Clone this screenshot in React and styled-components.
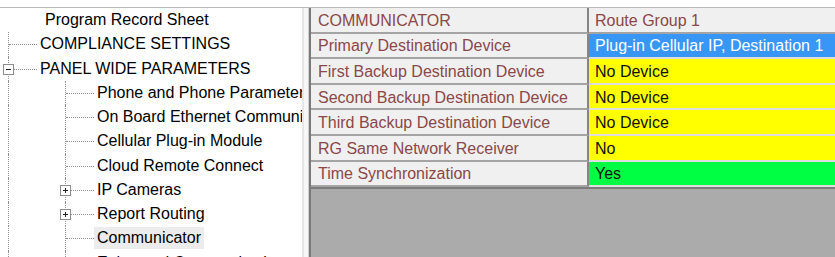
import React from 'react';
import styled, { createGlobalStyle, css } from 'styled-components';

const GlobalStyle = createGlobalStyle`
    html, body {
        margin: 0;
        padding: 0;
        background: #ffffff;
        overflow: hidden;
    }
`;

const Frame = styled.div`
    width: 835px;
    height: 257px;
    padding-top: 7px;
    box-sizing: border-box;
    background: #ffffff;
    font-family: 'Liberation Sans', Arial, sans-serif;
`;

const Main = styled.div`
    display: flex;
    height: 250px;
    border-top: 1px solid #b9b9b9;
    box-sizing: border-box;
`;

const TreePanel = styled.div`
    width: 302px;
    flex-shrink: 0;
    overflow: hidden;
    background: #ffffff;
`;

const TreeRow = styled.div`
    display: flex;
    align-items: center;
    height: 24.25px;
    white-space: nowrap;
    padding-left: ${p => (p.$root ? '42px' : '0')};
`;

const dotted = '1px dotted #8f8f8f';

const Guide = styled.div`
    position: relative;
    width: 57px;
    height: 100%;
    flex-shrink: 0;

    &::before {
        content: '';
        position: absolute;
        left: 8px;
        top: 0;
        bottom: 0;
        border-left: ${dotted};
    }
`;

const Connector = styled.div`
    position: relative;
    width: 37px;
    height: 100%;
    flex-shrink: 0;

    &::before {
        content: '';
        position: absolute;
        left: 8px;
        top: 0;
        bottom: 0;
        border-left: ${dotted};
    }

    &::after {
        content: '';
        position: absolute;
        left: 9px;
        right: 0;
        top: 50%;
        border-top: ${dotted};
    }
`;

const Expander = styled.span`
    position: absolute;
    z-index: 1;
    left: 3px;
    top: calc(50% - 5px);
    width: 9px;
    height: 9px;
    border: 1px solid #8c8c8c;
    background: #ffffff;

    &::before {
        content: '';
        position: absolute;
        left: 2px;
        top: 4px;
        width: 5px;
        height: 1px;
        background: #222222;
    }

    ${p => p.$plus && css`
        &::after {
            content: '';
            position: absolute;
            left: 4px;
            top: 2px;
            width: 1px;
            height: 5px;
            background: #222222;
        }
    `}
`;

const TreeLabel = styled.span`
    font-size: 16px;
    line-height: 22px;
    color: #000000;
    padding: 0 3px;
    background: ${p => (p.$selected ? '#ececec' : 'transparent')};
`;

const Splitter = styled.div`
    width: 7px;
    flex-shrink: 0;
    box-sizing: border-box;
    background: #f7f7f7;
    border-left: 2px solid #e6e6e6;
    border-right: 1px solid #d0d0d0;
`;

const GridArea = styled.div`
    flex: 1;
    background: #ababab;
    border-left: 2px solid #7a7a7a;
    overflow: hidden;
`;

const Table = styled.div`
    display: grid;
    grid-template-columns: 278px 1fr;
    grid-auto-rows: 25.6px;
    border-bottom: 2px solid #7c7c7c;
`;

const Cell = styled.div`
    display: flex;
    align-items: center;
    box-sizing: border-box;
    font-size: 16px;
    white-space: nowrap;
    overflow: hidden;
    padding: 2px 0 0 7px;
    background: #f0f0f0;
    color: #8a4848;
    border-bottom: 2px solid #a4a4a4;
`;

const LabelCell = styled(Cell)`
    border-right: 2px solid #858585;
`;

const valueColors = {
    head: { bg: '#f0f0f0', fg: '#8a4848', line: '#a4a4a4' },
    blue: { bg: '#3896f7', fg: '#ffffff', line: '#dcdcdc' },
    yellow: { bg: '#ffff00', fg: '#111111', line: '#dedede' },
    green: { bg: '#00ff42', fg: '#111111', line: '#dedede' },
};

const ValueCell = styled(Cell)`
    padding-left: 6px;
    background: ${p => valueColors[p.$tone].bg};
    color: ${p => valueColors[p.$tone].fg};
    border-bottom-color: ${p => valueColors[p.$tone].line};
`;

const treeRows = [
    { text: 'Program Record Sheet', root: true },
    { text: 'COMPLIANCE SETTINGS', level: 0 },
    { text: 'PANEL WIDE PARAMETERS', level: 0, expander: 'minus' },
    { text: 'Phone and Phone Parameters', level: 1 },
    { text: 'On Board Ethernet Communicator', level: 1 },
    { text: 'Cellular Plug-in Module', level: 1 },
    { text: 'Cloud Remote Connect', level: 1 },
    { text: 'IP Cameras', level: 1, expander: 'plus' },
    { text: 'Report Routing', level: 1, expander: 'plus' },
    { text: 'Communicator', level: 1, selected: true },
    { text: 'Enhanced Communication', level: 1 },
];

const gridRows = [
    { label: 'COMMUNICATOR', value: 'Route Group 1', tone: 'head' },
    { label: 'Primary Destination Device', value: 'Plug-in Cellular IP, Destination 1', tone: 'blue' },
    { label: 'First Backup Destination Device', value: 'No Device', tone: 'yellow' },
    { label: 'Second Backup Destination Device', value: 'No Device', tone: 'yellow' },
    { label: 'Third Backup Destination Device', value: 'No Device', tone: 'yellow' },
    { label: 'RG Same Network Receiver', value: 'No', tone: 'yellow' },
    { label: 'Time Synchronization', value: 'Yes', tone: 'green' },
];

const TreeItem = ({ row }) => {
    if (row.root) {
        return (
            <TreeRow $root>
                <TreeLabel>{row.text}</TreeLabel>
            </TreeRow>
        );
    }
    return (
        <TreeRow>
            {Array.from({ length: row.level }).map((_, i) => <Guide key={i} />)}
            <Connector>
                {row.expander && <Expander $plus={row.expander === 'plus'} />}
            </Connector>
            <TreeLabel $selected={row.selected}>{row.text}</TreeLabel>
        </TreeRow>
    );
};

export default function App() {
    return (
        <>
            <GlobalStyle />
            <Frame>
                <Main>
                    <TreePanel>
                        {treeRows.map(row => <TreeItem key={row.text} row={row} />)}
                    </TreePanel>
                    <Splitter />
                    <GridArea>
                        <Table>
                            {gridRows.map(row => (
                                <React.Fragment key={row.label}>
                                    <LabelCell>{row.label}</LabelCell>
                                    <ValueCell $tone={row.tone}>{row.value}</ValueCell>
                                </React.Fragment>
                            ))}
                        </Table>
                    </GridArea>
                </Main>
            </Frame>
        </>
    );
}
